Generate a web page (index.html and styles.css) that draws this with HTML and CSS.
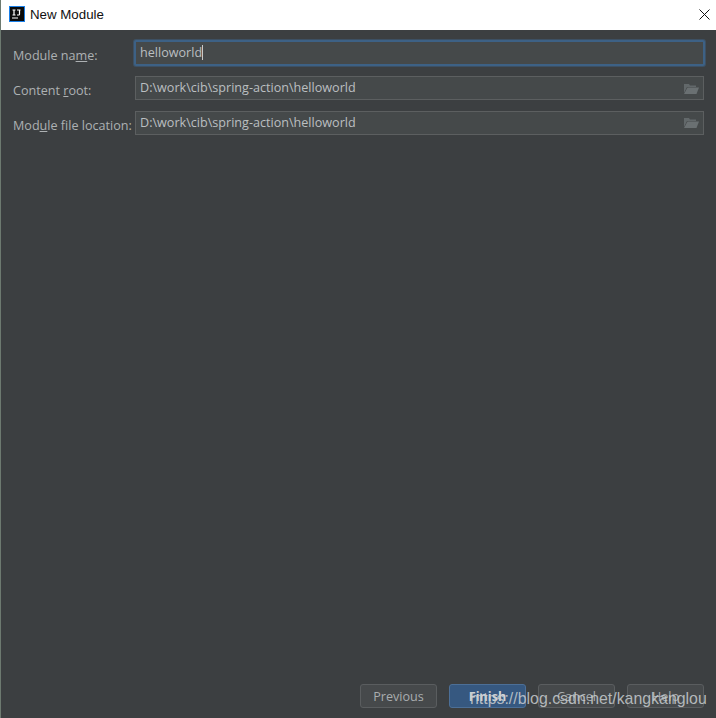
FILE: index.html
```html
<!DOCTYPE html>
<html lang="en">
<head>
<meta charset="utf-8">
<title>New Module</title>
<link rel="stylesheet" href="styles.css">
</head>
<body>
<div class="dialog">
  <header class="titlebar">
    <svg class="app-icon" width="16" height="16" viewBox="0 0 16 16"><rect x="0.5" y="0.5" width="15" height="15" fill="#0a0a0a" stroke="#1a7fe8"/><rect x="3" y="11.500" width="6" height="1" fill="#fff"/><path d="M3.500 4h3M5 4v5M3.500 9h3M8 4h3.500M10.500 4v4.200q0 .8-.8.8H8" fill="none" stroke="#fff" stroke-width="1.200"/></svg>
    <span class="title">New Module</span>
    <svg class="close" width="11" height="11" viewBox="0 0 11 11"><path d="M.5.5l10 10M10.500.5l-10 10" fill="none" stroke="#111" stroke-width="1"/></svg>
  </header>
  <main class="content">
    <form class="form">
      <label class="label">Module na<u>m</u>e:</label>
      <div class="field field-focus"><span>helloworld</span><i class="caret"></i></div>
      <label class="label">Content <u>r</u>oot:</label>
      <div class="field"><span>D:\work\cib\spring-action\helloworld</span>
        <svg class="folder" width="15" height="11" viewBox="0 0 15 11"><path d="M0 1h5l1 1.500h6V4H3L0 10z" fill="#62686a"/><path d="M3.500 4.500H15L12.500 11H0z" fill="#6a7072"/></svg>
      </div>
      <label class="label label-last">Mod<u>u</u>le file location:</label>
      <div class="field field-last"><span>D:\work\cib\spring-action\helloworld</span>
        <svg class="folder" width="15" height="11" viewBox="0 0 15 11"><path d="M0 1h5l1 1.500h6V4H3L0 10z" fill="#62686a"/><path d="M3.500 4.500H15L12.500 11H0z" fill="#6a7072"/></svg>
      </div>
    </form>
    <footer class="actions">
      <button class="btn" type="button">Previous</button>
      <button class="btn btn-primary" type="button">Finish</button>
      <button class="btn" type="button">Cancel</button>
      <button class="btn" type="button">Help</button>
    </footer>
  </main>
  <div class="watermark">https://blog.csdn.net/kangkanglou</div>
</div>
</body>
</html>
```
FILE: styles.css
```css
* { box-sizing: border-box; }
html, body { margin: 0; height: 100%; }
body { overflow: hidden; font-family: "Open Sans", "Noto Sans", sans-serif; }
.dialog {
  position: relative;
  width: 716px;
  height: 718px;
  display: flex;
  flex-direction: column;
  border-left: 1px solid #6d7a70;
  background: #3c3f41;
}
.titlebar {
  height: 30px;
  flex: none;
  background: #fff;
  display: flex;
  align-items: center;
  padding: 0 0 2px 8px;
  color: #111;
}
.app-icon { flex: none; }
.title { margin-left: 5px; font-family: "Liberation Sans", sans-serif; font-size: 13.300px; }
.close { margin-left: auto; margin-right: 6px; }
.content {
  flex: 1;
  display: flex;
  flex-direction: column;
  padding: 10px 11px 10px 12px;
  min-height: 0;
}
.form {
  display: grid;
  grid-template-columns: 122px 569px;
  grid-template-rows: 26px 24px 25px;
  row-gap: 10px;
  column-gap: 0;
  align-items: stretch;
  font-size: 12.600px;
}
.label { display: flex; align-items: center; padding-top: 4px; white-space: pre; color: #adb1b3; }
.label-last { padding-top: 5px; }
.field {
  position: relative;
  display: flex;
  align-items: center;
  border: 1px solid #5c5f60;
  background: #45494a;
  padding: 0 4px 1px 4px;
  color: #bbbfc1;
  line-height: 18px;
}
.field-last { margin-top: 1px; }
.field-last .folder { top: 5px; }
.field-focus {
  margin-left: -1px;
  margin-right: -1px;
  border: 2px solid #3d6185;
  border-radius: 2px;
  box-shadow: 0 0 0 1px rgba(61, 97, 133, .5);
  padding-left: 4px;
}
.caret { width: 1px; height: 15px; background: #c8c8c8; }
.folder { position: absolute; right: 4px; top: 6px; }
.actions { margin-top: auto; display: flex; justify-content: flex-end; gap: 12px; padding-right: 1px; }
.btn {
  width: 77px;
  height: 24px;
  padding: 0;
  border: 1px solid #5a5d5f;
  border-radius: 3px;
  background: #46494b;
  color: #a9adaf;
  font: inherit;
  font-size: 12.600px;
}
.btn-primary {
  background: #365880;
  border-color: #4c6f97;
  color: #d0d3d5;
  font-weight: 700;
}
.watermark {
  position: absolute;
  left: 469px;
  top: 689px;
  font-family: "Liberation Sans", sans-serif;
  font-size: 15.900px;
  line-height: 20px;
  color: rgba(200, 205, 208, .85);
  white-space: nowrap;
}
```
